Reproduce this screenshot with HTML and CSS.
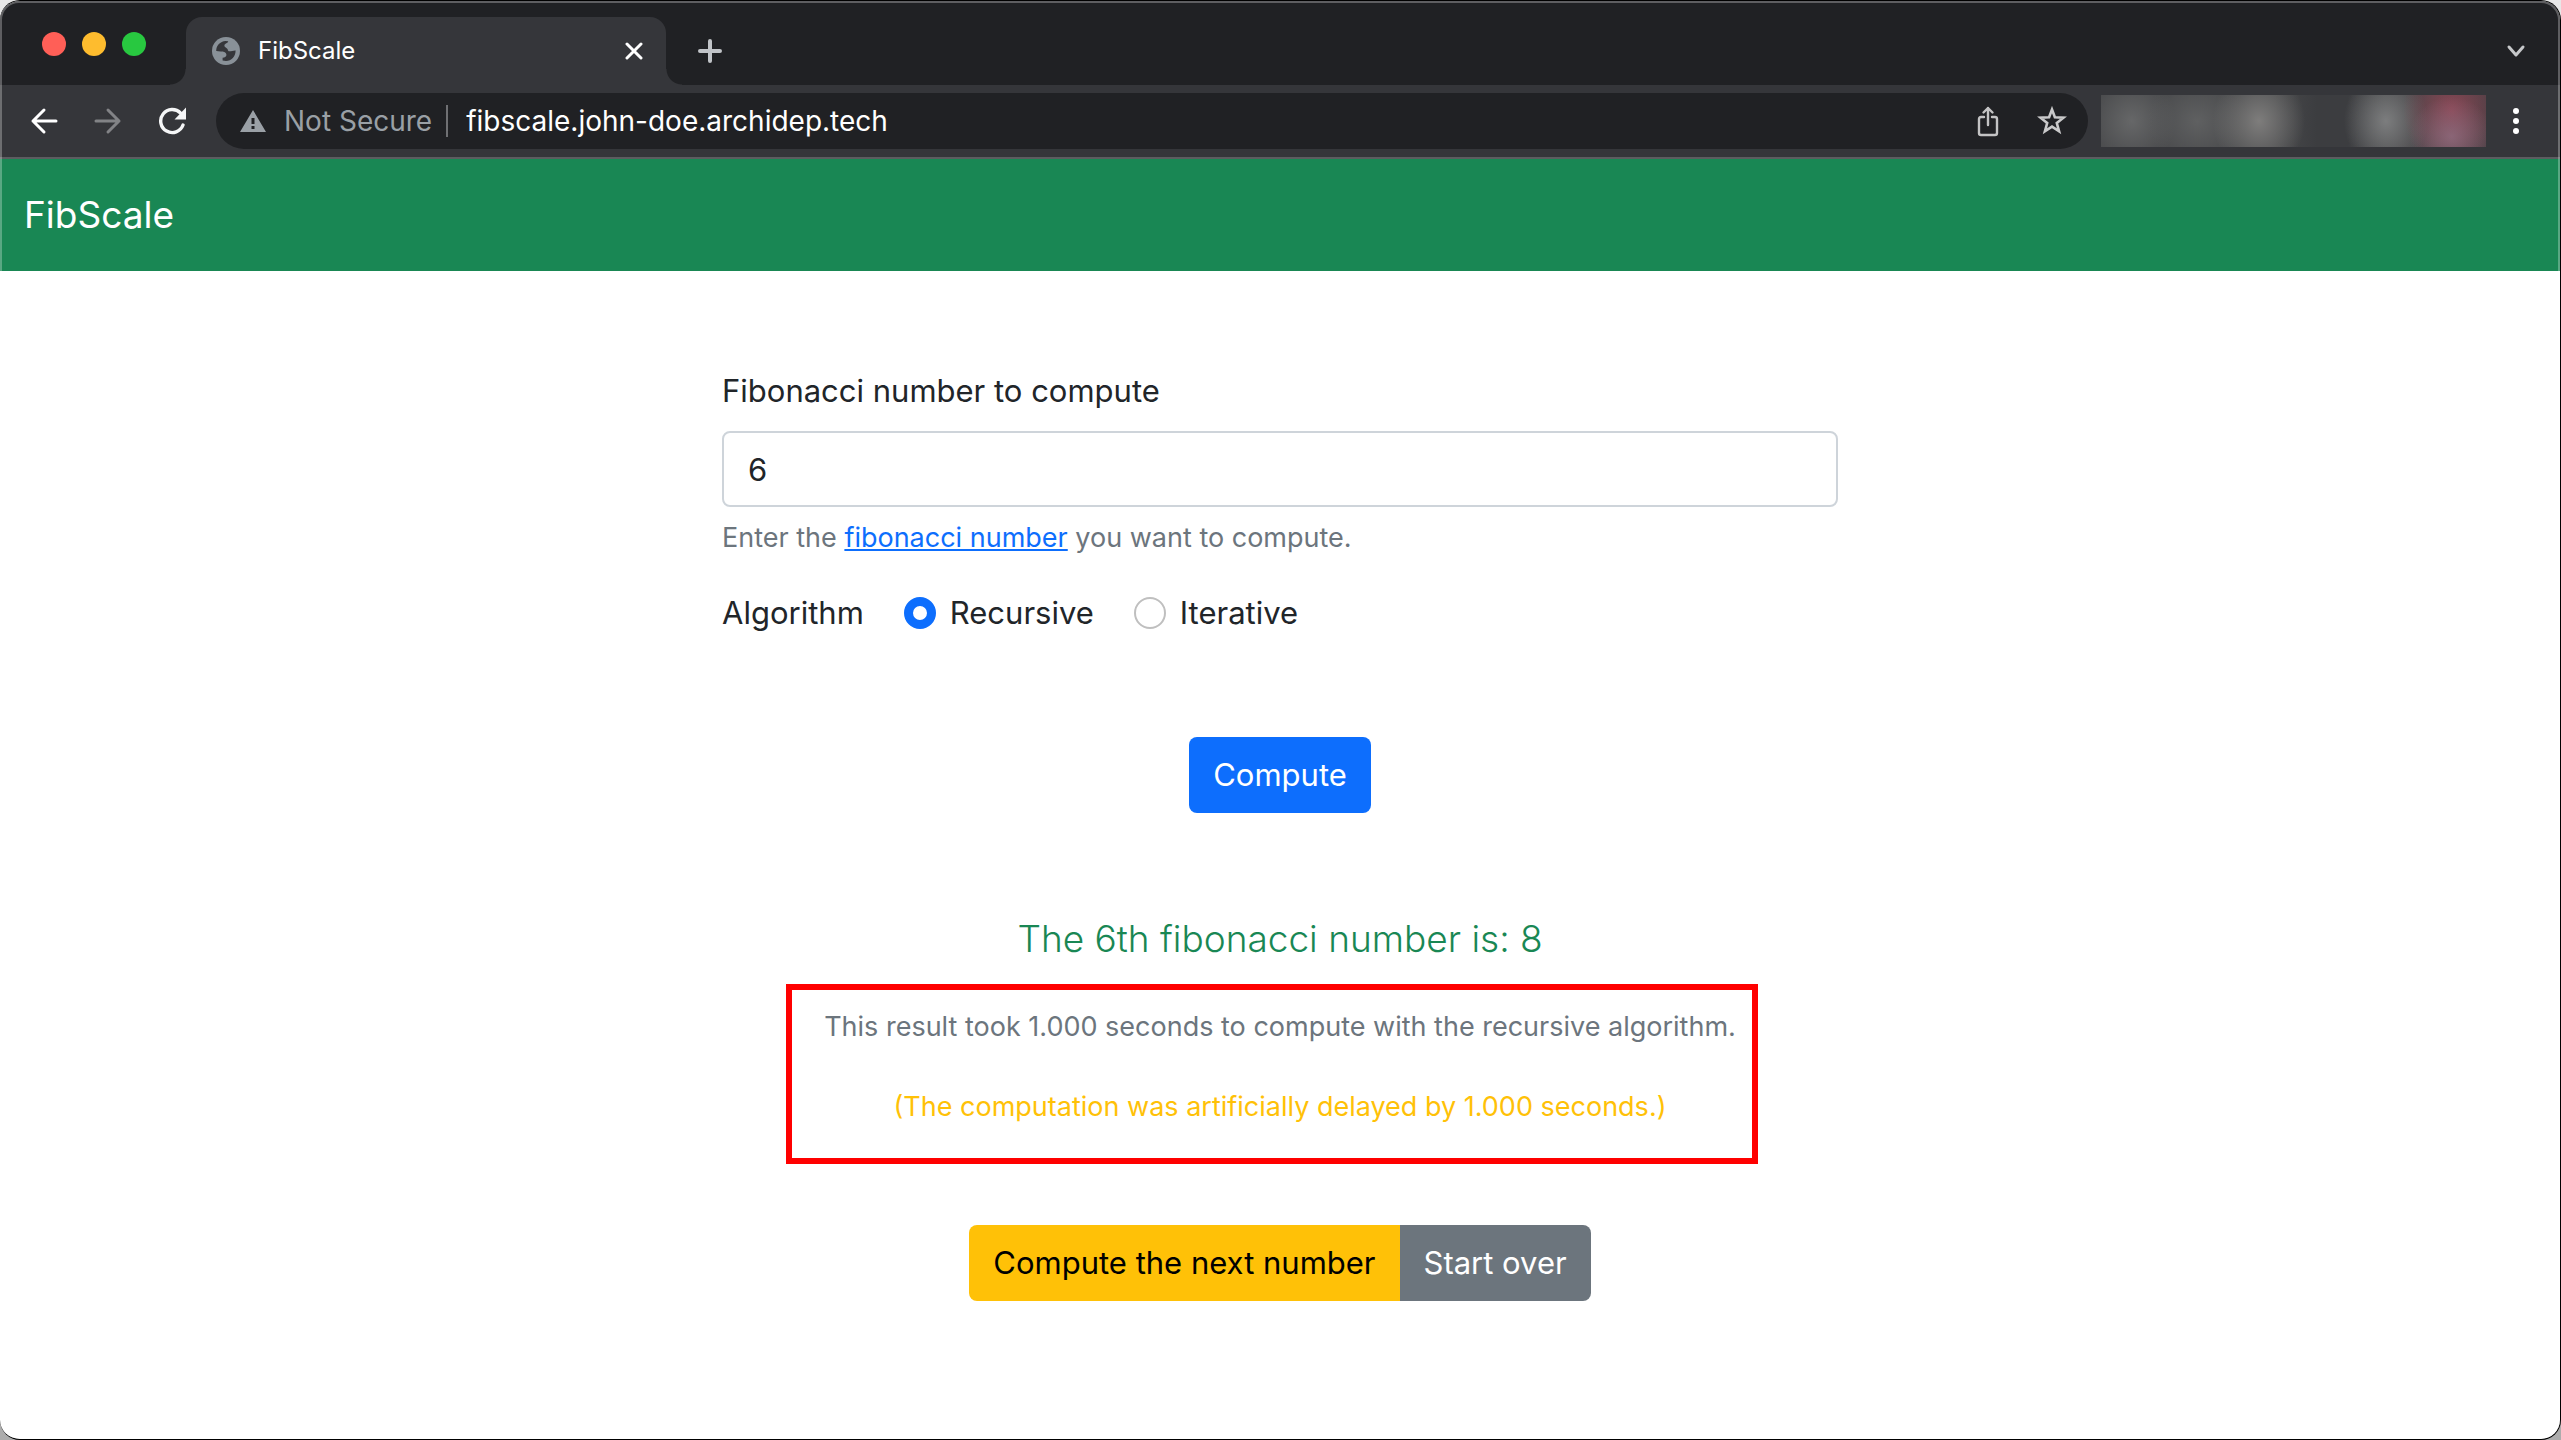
FILE: index.html
```html
<!DOCTYPE html>
<html lang="en">
<head>
  <meta charset="utf-8">
  <meta name="viewport" content="width=device-width, initial-scale=1">
  <title>FibScale</title>
  <link rel="stylesheet" href="styles.css">
</head>
<body>
  <div class="window">
    <header class="chrome">
      <div class="tab-strip">
        <div class="traffic-lights">
          <button class="light light-close" type="button" aria-label="Close window"></button>
          <button class="light light-minimize" type="button" aria-label="Minimize window"></button>
          <button class="light light-zoom" type="button" aria-label="Zoom window"></button>
        </div>
        <div class="tab">
          <svg class="icon-globe" viewBox="0 0 28 28" width="28" height="28" aria-hidden="true">
            <circle cx="14" cy="14" r="14" fill="#899198"/>
            <path fill="#35363a" d="M4.2 14C4.2 8.5 8.2 4.6 13.5 4.1L16.2 4.2C16 6.2 12.6 6.2 12.4 8.6C12.2 10.6 15.8 11 16 13.4C17.2 15.6 20.4 13.2 23.6 13.4C23.6 19.5 19.4 23.8 14 24L10.6 23.4V20.8C13 20.6 14.6 19.8 14.4 17.6C14.2 15.2 11 14.6 8.6 14.6Z"/>
          </svg>
          <span class="tab-title">FibScale</span>
          <button class="tab-close" type="button" aria-label="Close tab">
            <svg viewBox="0 0 18 18" width="18" height="18" fill="none" stroke="#fff" stroke-width="3" stroke-linecap="round"><path d="M2 2L16 16M16 2L2 16"/></svg>
          </button>
        </div>
        <button class="new-tab" type="button" aria-label="New tab">
          <svg viewBox="0 0 24 24" width="24" height="24" fill="none" stroke="#c1c4c8" stroke-width="4" stroke-linecap="round"><path d="M12 2V22M2 12H22"/></svg>
        </button>
        <button class="tab-search" type="button" aria-label="Search tabs">
          <svg viewBox="0 0 20 14" width="20" height="14" fill="none" stroke="#c6c8ca" stroke-width="3" stroke-linecap="round" stroke-linejoin="round"><path d="M3 3L10 11L17 3"/></svg>
        </button>
      </div>
      <div class="toolbar">
        <button class="tool" type="button" aria-label="Back">
          <svg viewBox="0 0 28 28" width="28" height="28" fill="none" stroke="#fff" stroke-width="3" stroke-linecap="round" stroke-linejoin="round"><path d="M14 3L3 14L14 25M3 14H26"/></svg>
        </button>
        <button class="tool" type="button" aria-label="Forward">
          <svg viewBox="0 0 28 28" width="28" height="28" fill="none" stroke="#828386" stroke-width="3" stroke-linecap="round" stroke-linejoin="round"><path d="M14 3L25 14L14 25M25 14H2"/></svg>
        </button>
        <button class="tool" type="button" aria-label="Reload">
          <svg viewBox="0 0 28 28" width="28" height="28"><path d="M22.6 6.2A11.5 11.5 0 1 0 25 18" fill="none" stroke="#f5f6f7" stroke-width="3.4" stroke-linecap="round"/><path d="M28 0.5V12.5H16.5Z" fill="#f5f6f7"/></svg>
        </button>
        <div class="omnibox">
          <button class="security" type="button">
            <svg viewBox="0 0 26 22" width="26" height="22" aria-hidden="true"><path fill="#9aa0a6" fill-rule="evenodd" d="M13 0L26 22H0ZM11.5 8V14H14.5V8ZM11.5 16V19H14.5V16Z"/></svg>
            Not Secure
          </button>
          <input class="address" type="text" aria-label="Address" value="fibscale.john-doe.archidep.tech">
          <button class="tool" type="button" aria-label="Share">
            <svg viewBox="0 0 22 32" width="22" height="32" fill="none" stroke="#c3c3c4" stroke-width="2.4" stroke-linecap="round" stroke-linejoin="round"><path d="M7 12H4Q2 12 2 14V28Q2 30 4 30H18Q20 30 20 28V14Q20 12 18 12H15M11 20V3M6.5 7.5L11 3L15.5 7.5"/></svg>
          </button>
          <button class="tool" type="button" aria-label="Bookmark this tab">
            <svg viewBox="0 0 30 30" width="30" height="30" fill="none" stroke="#c9c9ca" stroke-width="2.6"><path d="M15 3.5L17.9 11.3L26.5 11.7L19.8 17L22.1 25.3L15 20.6L7.9 25.3L10.2 17L3.5 11.7L12.1 11.3Z"/></svg>
          </button>
        </div>
        <div class="extensions"></div>
        <button class="menu" type="button" aria-label="Browser menu">
          <svg viewBox="0 0 6 26" width="6" height="26" fill="#fff"><circle cx="3" cy="3" r="3"/><circle cx="3" cy="13" r="3"/><circle cx="3" cy="23" r="3"/></svg>
        </button>
      </div>
    </header>

    <nav class="navbar"><a class="brand" href="#">FibScale</a></nav>

    <main class="content">
      <form class="fib-form">
        <label class="field-label" for="number">Fibonacci number to compute</label>
        <input class="field" id="number" type="text" inputmode="numeric" value="6" aria-describedby="number-help">
        <p class="help" id="number-help">Enter the <a href="#">fibonacci number</a> you want to compute.</p>
        <div class="algorithm" role="radiogroup" aria-labelledby="algorithm-label">
          <span id="algorithm-label">Algorithm</span>
          <label class="choice"><input type="radio" name="algorithm" value="recursive" checked>Recursive</label>
          <label class="choice"><input type="radio" name="algorithm" value="iterative">Iterative</label>
        </div>
        <button class="btn btn-primary" type="submit">Compute</button>
      </form>

      <section class="result">
        <p class="lead">The 6th fibonacci number is: 8</p>
        <div class="details">
          <p class="timing">This result took 1.000 seconds to compute with the recursive algorithm.</p>
          <p class="delay">(The computation was artificially delayed by 1.000 seconds.)</p>
          <div class="highlight"></div>
        </div>
        <div class="btn-group">
          <button class="btn btn-warning" type="button">Compute the next number</button>
          <button class="btn btn-secondary" type="button">Start over</button>
        </div>
      </section>
    </main>
  </div>
</body>
</html>
```
FILE: styles.css
```css
*,
*::before,
*::after {
  box-sizing: border-box;
}

body {
  margin: 0;
  background: linear-gradient(#e8e8e8, #acacac);
  color: #212529;
  font: 400 31px/48px Inter, "Liberation Sans", sans-serif;
}

p {
  margin: 0;
}

button,
input {
  font: inherit;
  color: inherit;
}

button {
  display: flex;
  align-items: center;
  justify-content: center;
  padding: 0;
  border: 0;
  background: none;
}

svg {
  display: block;
  flex: none;
}

/* Browser window */

.window {
  position: relative;
  min-height: 100vh;
  overflow: hidden;
  border: 1px solid #000;
  border-left-width: 0;
  border-radius: 20px;
  background: #fff;
}

.window::after {
  content: "";
  position: absolute;
  inset: 0;
  border-radius: 19px;
  box-shadow: inset 0 0 0 2px rgba(255, 255, 255, 0.28);
  pointer-events: none;
}

.tab-strip {
  display: flex;
  align-items: center;
  height: 84px;
  padding-left: 42px;
  background: #202124;
}

.traffic-lights {
  display: flex;
  gap: 16px;
  margin-right: 40px;
  padding-top: 2px;
}

.light {
  width: 24px;
  height: 24px;
  border-radius: 50%;
}

.light-close {
  background: #ff5f57;
}

.light-minimize {
  background: #febc2e;
}

.light-zoom {
  background: #28c840;
}

.tab {
  position: relative;
  display: flex;
  align-items: center;
  align-self: flex-end;
  width: 480px;
  height: 68px;
  padding: 0 23px 0 26px;
  border-radius: 16px 16px 0 0;
  background: #35363a;
  color: #fff;
  font-size: 24px;
}

.tab::before,
.tab::after {
  content: "";
  position: absolute;
  bottom: 0;
  width: 16px;
  height: 16px;
}

.tab::before {
  right: 100%;
  background: radial-gradient(circle at 0 0, transparent 15px, #35363a 16px);
}

.tab::after {
  left: 100%;
  background: radial-gradient(circle at 100% 0, transparent 15px, #35363a 16px);
}

.tab-title {
  flex: 1;
  margin-left: 18px;
}

.new-tab,
.tab-search {
  align-self: flex-end;
  height: 68px;
}

.new-tab {
  width: 88px;
}

.tab-search {
  width: 88px;
  margin-left: auto;
}

.toolbar {
  display: flex;
  align-items: center;
  height: 74px;
  padding: 0 14px 0 12px;
  border-bottom: 2px solid #5c5d60;
  background: #35363a;
}

.tool {
  width: 64px;
  height: 56px;
}

.omnibox {
  display: flex;
  flex: 1;
  align-items: center;
  height: 56px;
  margin: 0 13px 0 12px;
  padding: 0 4px 0 24px;
  border-radius: 28px;
  background: #202124;
  font-size: 28px;
}

.security {
  gap: 18px;
  height: 32px;
  padding-right: 14px;
  border-right: 2px solid #6f7073;
  color: #9aa0a6;
}

.address {
  flex: 1;
  min-width: 0;
  padding: 0 18px;
  border: 0;
  background: none;
  color: #fff;
}

/* Row of out-of-focus extension icons */
.extensions {
  width: 385px;
  height: 52px;
  background:
    radial-gradient(ellipse 42px 40px at 91% 80%, rgba(150, 115, 135, 0.7), transparent),
    radial-gradient(ellipse 48px 60px at 91% 30%, rgba(145, 70, 85, 0.9), transparent),
    radial-gradient(ellipse 42px 50px at 74% 50%, #7c7d7e, transparent),
    radial-gradient(ellipse 46px 52px at 41% 50%, #7e7d7c, transparent),
    radial-gradient(ellipse 50px 46px at 25% 50%, #5f6061, transparent),
    radial-gradient(ellipse 44px 46px at 8% 50%, #666768, transparent),
    linear-gradient(90deg, #48494b 0 45%, #3c3d40 56% 64%, #48494b 74%, #4a3f44);
}

.menu {
  width: 60px;
  height: 56px;
}

/* Page */

.navbar {
  padding: 26px 24px;
  background: #198754;
}

.brand {
  display: block;
  width: max-content;
  color: #fff;
  font-size: 37px;
  line-height: 60px;
  text-decoration: none;
}

.content {
  display: flex;
  flex-direction: column;
  gap: 96px;
  max-width: 1116px;
  margin: 0 auto;
  padding: 96px 0;
}

.fib-form {
  display: flex;
  flex-direction: column;
}

.field-label {
  margin-bottom: 16px;
}

.field {
  width: 100%;
  height: 76px;
  padding: 0 24px;
  border: 2px solid #ced4da;
  border-radius: 8px;
  background: #fff;
}

.help {
  margin: 10px 0 30px;
  color: #6c757d;
  font-size: 27px;
  line-height: 42px;
}

.help a {
  color: #0d6efd;
}

.algorithm {
  display: flex;
  gap: 40px;
  margin-bottom: 100px;
}

.choice {
  display: flex;
  align-items: center;
  gap: 14px;
}

.choice input {
  appearance: none;
  width: 32px;
  height: 32px;
  margin: 0;
  border: 2px solid #bfbfbf;
  border-radius: 50%;
  background: #fff;
}

.choice input:checked {
  border: 9px solid #0d6efd;
}

.btn {
  padding: 14px 24px;
  border-radius: 8px;
}

.btn-primary {
  align-self: center;
  background: #0d6efd;
  color: #fff;
}

.btn-warning {
  border-radius: 8px 0 0 8px;
  background: #ffc107;
  color: #000;
}

.btn-secondary {
  border-radius: 0 8px 8px 0;
  background: #6c757d;
  color: #fff;
}

.result {
  display: flex;
  flex-direction: column;
  align-items: center;
  text-align: center;
}

.lead {
  margin-bottom: 34px;
  color: #198754;
  font-size: 37px;
  font-weight: 300;
  line-height: 60px;
}

.details {
  position: relative;
  display: flex;
  flex-direction: column;
  gap: 32px;
  width: 100%;
  margin-bottom: 94px;
  font-size: 27px;
}

.timing {
  color: #6c757d;
}

.delay {
  color: #ffc107;
}

/* Callout frame drawn over the timing notes */
.highlight {
  position: absolute;
  inset: -19px 80px -33px 64px;
  border: 6px solid #f00;
  pointer-events: none;
}

.btn-group {
  display: flex;
}
```
